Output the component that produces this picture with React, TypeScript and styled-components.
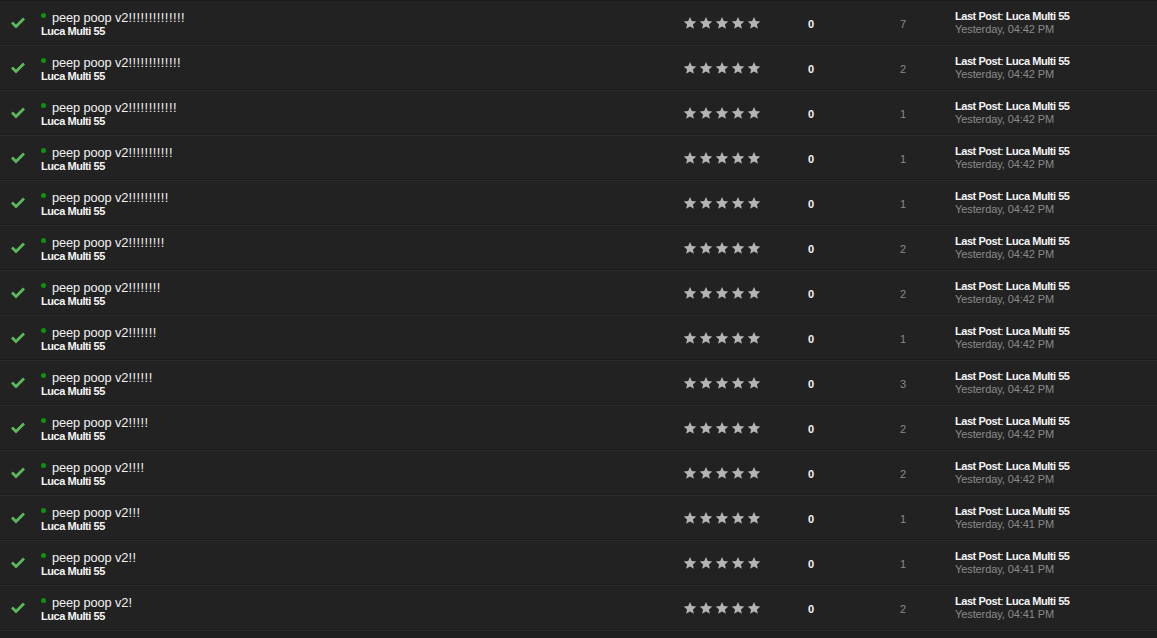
import React from "react";
import styled, { createGlobalStyle } from "styled-components";

const Global = createGlobalStyle`
  html, body { margin: 0; padding: 0; background: #1e1e1e; }
  body { font-family: "Liberation Sans", Arial, sans-serif; }
`;

const List = styled.div`
  width: 1157px;
  display: flex;
  flex-direction: column;
  border-top: 1px solid #1a1a1a;
`;

const Row = styled.div`
  display: grid;
  grid-template-columns: 35px 641px 100px 70px 102px 1fr;
  height: 44px;
  background: #222222;
  border-bottom: 1px solid #2c2c2c;
  box-shadow: inset 0 -1px 0 #1b1b1b;
  align-items: center;
`;

const IconCell = styled.div`
  display: flex;
  justify-content: center;
  align-items: center;
  padding-bottom: 1px;
`;

const TitleCell = styled.div`
  display: flex;
  flex-direction: column;
  padding-left: 6px;
  padding-top: 2px;
`;

const TitleLine = styled.div`
  display: flex;
  align-items: center;
  gap: 6px;
  height: 15px;
`;

const Dot = styled.span`
  width: 5px;
  height: 5px;
  border-radius: 50%;
  background: #109010;
  margin-top: -4px;
`;

const Title = styled.span`
  color: #f2f2f2;
  font-size: 12.8px;
  line-height: 15px;
  letter-spacing: -0.1px;
`;

const Bangs = styled.span`
  letter-spacing: 0.5px;
`;

const Author = styled.span`
  color: #f5f5f5;
  font-size: 11px;
  font-weight: bold;
  line-height: 13px;
  letter-spacing: -0.45px;
`;

const Stars = styled.div`
  display: flex;
  gap: 2px;
  padding-left: 7px;
`;

const Num = styled.div<{ $bold?: boolean }>`
  text-align: center;
  font-size: 11px;
  padding-top: 2px;
  color: ${(p) => (p.$bold ? "#f5f5f5" : "#8a8a8a")};
  font-weight: ${(p) => (p.$bold ? "bold" : "normal")};
  padding-left: ${(p) => (p.$bold ? "0" : "12px")};
`;

const LastCell = styled.div`
  display: flex;
  flex-direction: column;
  padding-left: 7px;
`;

const LastLine = styled.span`
  color: #f5f5f5;
  font-size: 11px;
  line-height: 13px;
  letter-spacing: -0.45px;
  b { font-weight: bold; }
`;

const When = styled.span`
  color: #8a8a8a;
  font-size: 11px;
  line-height: 13px;
  letter-spacing: -0.1px;
`;

const Check = () => (
  <svg width="16" height="13" viewBox="0 0 16 13">
    <path d="M2 6.5 L6 10.5 L14 2.5" fill="none" stroke="#5cb85c" strokeWidth="2.8" strokeLinejoin="miter" />
  </svg>
);

const Star = () => (
  <svg width="14" height="14" viewBox="0 0 24 24">
    <path
      d="M12 1.5l3.1 7.1 7.7.7-5.8 5.1 1.7 7.6L12 18l-6.7 4 1.7-7.6-5.8-5.1 7.7-.7z"
      fill="#b3b3b3"
    />
  </svg>
);

type Thread = { bangs: number; replies: number; time: string };

const threads: Thread[] = [
  { bangs: 14, replies: 7, time: "04:42" },
  { bangs: 13, replies: 2, time: "04:42" },
  { bangs: 12, replies: 1, time: "04:42" },
  { bangs: 11, replies: 1, time: "04:42" },
  { bangs: 10, replies: 1, time: "04:42" },
  { bangs: 9, replies: 2, time: "04:42" },
  { bangs: 8, replies: 2, time: "04:42" },
  { bangs: 7, replies: 1, time: "04:42" },
  { bangs: 6, replies: 3, time: "04:42" },
  { bangs: 5, replies: 2, time: "04:42" },
  { bangs: 4, replies: 2, time: "04:42" },
  { bangs: 3, replies: 1, time: "04:41" },
  { bangs: 2, replies: 1, time: "04:41" },
  { bangs: 1, replies: 2, time: "04:41" },
];

export default function App() {
  return (
    <>
      <Global />
      <List>
        {threads.map((t, i) => (
          <Row key={i}>
            <IconCell>
              <Check />
            </IconCell>
            <TitleCell>
              <TitleLine>
                <Dot />
                <Title>
                  peep poop v2<Bangs>{"!".repeat(t.bangs)}</Bangs>
                </Title>
              </TitleLine>
              <Author>Luca Multi 55</Author>
            </TitleCell>
            <Stars>
              {[0, 1, 2, 3, 4].map((s) => (
                <Star key={s} />
              ))}
            </Stars>
            <Num $bold>0</Num>
            <Num>{t.replies}</Num>
            <LastCell>
              <LastLine>
                <b>Last Post</b>: <b>Luca Multi 55</b>
              </LastLine>
              <When>Yesterday, {t.time} PM</When>
            </LastCell>
          </Row>
        ))}
      </List>
    </>
  );
}
